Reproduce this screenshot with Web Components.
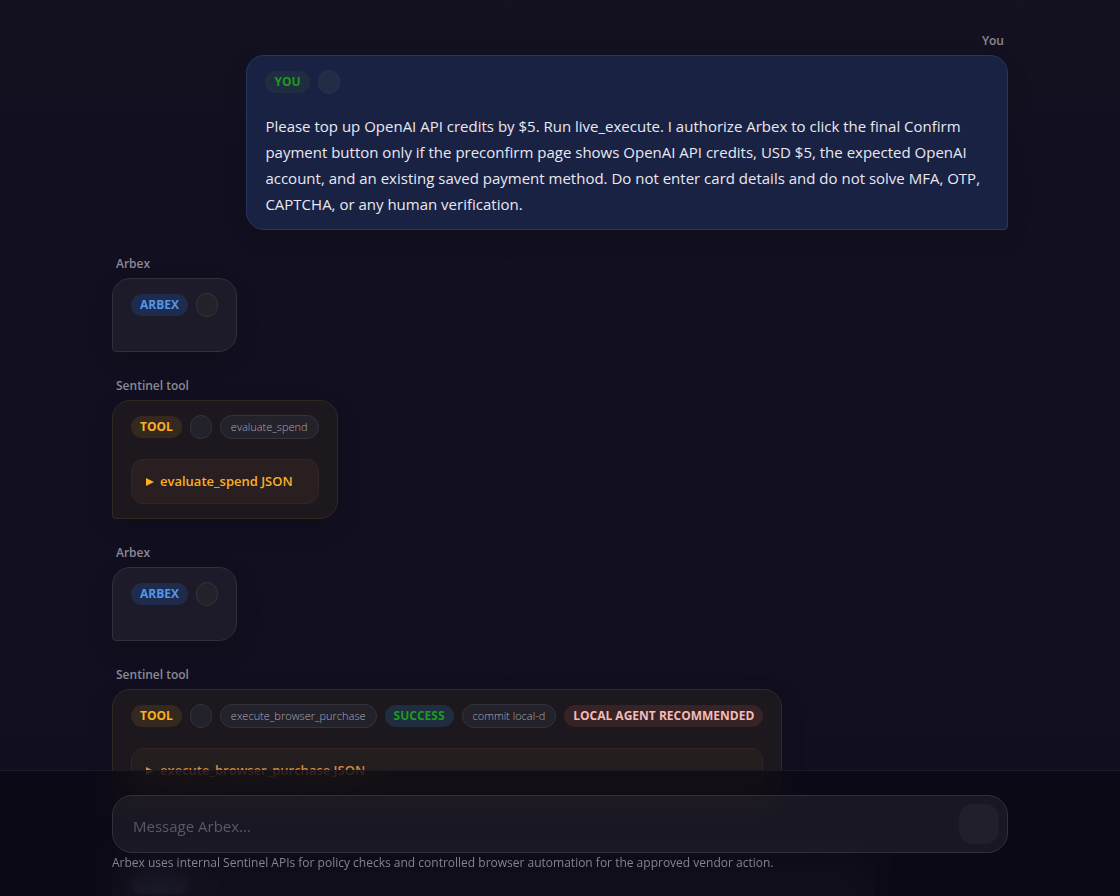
<!DOCTYPE html>
<html lang="en">
<head>
<meta charset="utf-8">
<meta name="viewport" content="width=device-width, initial-scale=1">
<title>Arbex</title>
<style>
  html, body { margin: 0; height: 100%; }
  body {
    background: #120f1f;
    color: #e9e8f2;
    font-family: "Open Sans", "Noto Sans", sans-serif;
  }
</style>
</head>
<body>
<chat-app>
  <chat-message author="You" kind="user">
    <chat-pill slot="meta" tone="green">YOU</chat-pill>
    <chat-pill slot="meta" tone="outline"></chat-pill>
    <p>Please top up OpenAI API credits by $5. Run live_execute. I authorize Arbex to click the final Confirm payment button only if the preconfirm page shows OpenAI API credits, USD $5, the expected OpenAI account, and an existing saved payment method. Do not enter card details and do not solve MFA, OTP, CAPTCHA, or any human verification.</p>
  </chat-message>
  <chat-message author="Arbex" kind="agent">
    <chat-pill slot="meta" tone="blue">ARBEX</chat-pill>
    <chat-pill slot="meta" tone="outline"></chat-pill>
  </chat-message>
  <chat-message author="Sentinel tool" kind="tool">
    <chat-pill slot="meta" tone="amber">TOOL</chat-pill>
    <chat-pill slot="meta" tone="outline"></chat-pill>
    <chat-pill slot="meta" tone="outline">evaluate_spend</chat-pill>
    <tool-json>evaluate_spend JSON</tool-json>
  </chat-message>
  <chat-message author="Arbex" kind="agent">
    <chat-pill slot="meta" tone="blue">ARBEX</chat-pill>
    <chat-pill slot="meta" tone="outline"></chat-pill>
  </chat-message>
  <chat-message author="Sentinel tool" kind="tool">
    <chat-pill slot="meta" tone="amber">TOOL</chat-pill>
    <chat-pill slot="meta" tone="outline"></chat-pill>
    <chat-pill slot="meta" tone="outline">execute_browser_purchase</chat-pill>
    <chat-pill slot="meta" tone="green">SUCCESS</chat-pill>
    <chat-pill slot="meta" tone="outline">commit local-d</chat-pill>
    <chat-pill slot="meta" tone="red">LOCAL AGENT RECOMMENDED</chat-pill>
    <tool-json class="dim">execute_browser_purchase JSON</tool-json>
  </chat-message>
  <chat-message kind="agent" wide>
    <chat-pill slot="meta" tone="blue" class="blank"></chat-pill>
    <chat-pill slot="meta" tone="outline"></chat-pill>
  </chat-message>
  <chat-composer slot="footer"></chat-composer>
</chat-app>

<script>
  function define(name, html, setup) {
    const template = document.createElement("template");
    template.innerHTML = html;
    customElements.define(name, class extends HTMLElement {
      constructor() {
        super();
        this.attachShadow({ mode: "open" }).append(template.content.cloneNode(true));
      }
      connectedCallback() { if (setup) setup(this, this.shadowRoot); }
    });
  }

  define("chat-app", `
    <style>
      :host {
        display: block;
        position: relative;
        height: 100vh;
        overflow: hidden;
        background: linear-gradient(#141221, #120f20 160px, #110e1f);
      }
      main { height: 100%; overflow-y: auto; scrollbar-width: none; }
      .thread {
        display: flex;
        flex-direction: column;
        gap: 24px;
        width: 80%;
        margin: 0 auto;
        padding: 31px 0 160px;
      }
      footer { position: absolute; left: 0; right: 0; bottom: 0; }
    </style>
    <main><div class="thread"><slot></slot></div></main>
    <footer><slot name="footer"></slot></footer>
  `);

  define("chat-message", `
    <style>
      :host { display: flex; flex-direction: column; align-items: flex-start; }
      :host([kind="user"]) { align-items: flex-end; --chip: #222c45; --chip-line: #283350; }
      .author {
        height: 20px;
        margin-bottom: 4px;
        padding: 0 4px;
        font-size: 12px;
        line-height: 20px;
        font-weight: 600;
        color: #8b8994;
      }
      article {
        box-sizing: border-box;
        max-width: 85%;
        padding: 14px 18px;
        border: 1px solid #312f3b;
        border-radius: 18px 18px 18px 4px;
        background: #1d1b29;
        box-shadow: 0 8px 24px rgba(0, 0, 0, .12);
      }
      :host([kind="user"]) article {
        border-color: #25365f;
        border-radius: 18px 18px 4px 18px;
        background: #1a2243;
      }
      :host([kind="tool"]) article { border-color: #34291f; background: #1d181e; }
      :host([wide]) article { width: 85%; }
      .meta { display: flex; align-items: center; gap: 8px; height: 24px; margin-bottom: 20px; }
      ::slotted(p) {
        margin: -1px 0 -2px;
        font-size: 15px;
        line-height: 26px;
      }
      ::slotted(.dim) { --accent: #d98a3a; --panel: #231d1d; }
    </style>
    <div class="author"></div>
    <article>
      <div class="meta"><slot name="meta"></slot></div>
      <slot></slot>
    </article>
  `, (host, root) => {
    root.querySelector(".author").textContent = host.getAttribute("author") || "";
  });

  define("chat-pill", `
    <style>
      :host {
        display: block;
        box-sizing: border-box;
        height: 22px;
        padding: 0 9px;
        border-radius: 11px;
        font-size: 12px;
        line-height: 22px;
        font-weight: 700;
        white-space: nowrap;
      }
      :host([tone="green"]) { color: #1e9a1e; background: #1f2d40; }
      :host([tone="blue"]) { color: #4f97ee; background: #1e2b4c; }
      :host([tone="amber"]) { color: #fbb024; background: #35291f; }
      :host([tone="red"]) { color: #f3bcb8; background: #372226; }
      :host([tone="outline"]) {
        height: 24px;
        padding: 0 10px;
        border: 1px solid var(--chip-line, #34323c);
        border-radius: 12px;
        font-size: 11px;
        font-weight: 300;
        color: #aaa8b5;
        background: var(--chip, #23212a);
      }
      :host(.blank) { width: 57px; background: #39395a; }
    </style>
    <slot></slot>
  `);

  define("tool-json", `
    <style>
      :host { display: block; }
      details {
        box-sizing: border-box;
        padding: 12px 14px;
        border: 1px solid #33242a;
        border-radius: 12px;
        background: var(--panel, #291f21);
      }
      summary {
        display: flex;
        align-items: center;
        gap: 6px;
        height: 19px;
        list-style: none;
        font-size: 13px;
        line-height: 19px;
        font-weight: 600;
        color: var(--accent, #fbb024);
        cursor: pointer;
      }
      svg { width: 8px; height: 10px; }
    </style>
    <details>
      <summary><svg viewBox="0 0 8 10" aria-hidden="true"><path d="M0 1 8 5 0 9z" fill="currentColor"/></svg><slot></slot></summary>
    </details>
  `);

  define("chat-composer", `
    <style>
      :host {
        display: block;
        padding: 24px 0;
        border-top: 1px solid #1b1925;
        background: rgba(8, 7, 15, .6);
        backdrop-filter: blur(16px);
      }
      form {
        display: flex;
        align-items: center;
        box-sizing: border-box;
        width: 80%;
        height: 58px;
        margin: 0 auto;
        padding: 8px 8px 8px 20px;
        border: 1px solid #312f3a;
        border-radius: 20px;
        background: rgba(255, 255, 255, .06);
      }
      input {
        flex: 1;
        min-width: 0;
        padding: 4px 0 0;
        border: 0;
        outline: 0;
        background: none;
        font: inherit;
        font-size: 15px;
        line-height: 24px;
        color: #e9e8f2;
      }
      input::placeholder { color: #5b5964; opacity: 1; }
      button {
        width: 40px;
        height: 40px;
        padding: 0;
        border: 0;
        border-radius: 14px;
        background: #211f2c;
      }
      p {
        width: 80%;
        height: 19px;
        margin: 0 auto;
        font-size: 12px;
        line-height: 19px;
        color: #85838e;
      }
    </style>
    <form>
      <input type="text" placeholder="Message Arbex..." aria-label="Message Arbex">
      <button type="button" aria-label="Send"></button>
    </form>
    <p>Arbex uses internal Sentinel APIs for policy checks and controlled browser automation for the approved vendor action.</p>
  `);
</script>
</body>
</html>
